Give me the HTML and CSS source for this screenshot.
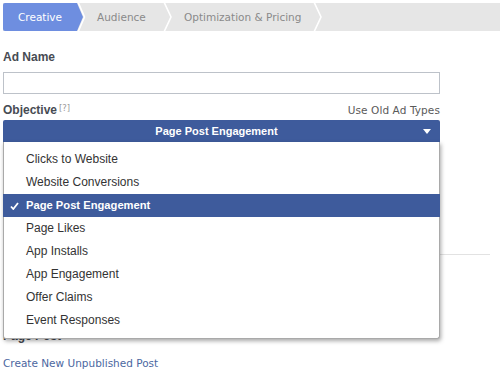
FILE: index.html
```html
<!DOCTYPE html>
<html>
<head>
<meta charset="utf-8">
<link rel="stylesheet" href="styles.css">
</head>
<body>
<div class="page">
  <nav class="steps">
    <div class="step step-active">Creative</div>
    <svg class="sep" width="10" height="28" viewBox="0 0 10 28"><polygon points="0,0 6,14 0,28" fill="#6e8ee0"/><polyline points="1,-1 7.5,14 1,29" fill="none" stroke="#fff" stroke-width="1.6"/></svg>
    <div class="step step-2">Audience</div>
    <svg class="sep" width="10" height="28" viewBox="0 0 10 28"><polyline points="1,-1 8,14 1,29" fill="none" stroke="#fff" stroke-width="1.6"/></svg>
    <div class="step step-3">Optimization &amp; Pricing</div>
    <svg class="sep" width="10" height="28" viewBox="0 0 10 28"><polyline points="1,-1 8,14 1,29" fill="none" stroke="#fff" stroke-width="1.6"/></svg>
  </nav>

  <div class="label label-first">Ad Name</div>
  <div class="input"></div>

  <div class="label-row">
    <div class="label">Objective<sup class="help">[?]</sup></div>
    <span class="old-types">Use Old Ad Types</span>
  </div>

  <div class="select">
    <div class="select-bar">
      <span class="select-text">Page Post Engagement</span>
      <svg class="caret" width="8" height="5" viewBox="0 0 8 5"><polygon points="0,0 8,0 4,5" fill="#fff"/></svg>
    </div>
    <ul class="menu">
      <li class="item">Clicks to Website</li>
      <li class="item">Website Conversions</li>
      <li class="item item-selected"><svg class="check" width="9" height="8" viewBox="0 0 9 8"><polyline points="1,4.5 3.3,7 8,1" fill="none" stroke="#fff" stroke-width="1.8"/></svg>Page Post Engagement</li>
      <li class="item">Page Likes</li>
      <li class="item">App Installs</li>
      <li class="item">App Engagement</li>
      <li class="item">Offer Claims</li>
      <li class="item">Event Responses</li>
    </ul>
  </div>

  <hr class="divider">
  <div class="input input-hidden"></div>
  <div class="label label-post">Page Post</div>
  <a class="link" href="#">Create New Unpublished Post</a>
</div>
</body>
</html>
```
FILE: styles.css
```css
html, body {
  margin: 0;
  padding: 0;
  background: #fff;
}
.page {
  padding: 3px 0 0 3px;
  font-family: "DejaVu Sans", sans-serif;
}
.steps {
  display: flex;
  align-items: center;
  height: 28px;
  background: #e6e6e6;
  font-size: 10.5px;
  color: #8a8a8a;
}
.step {
  height: 28px;
  line-height: 28px;
  white-space: nowrap;
}
.step-active {
  background: #6e8ee0;
  color: #fff;
  width: 59px;
  padding-left: 15px;
  border-radius: 2px 0 0 2px;
}
.step-2 {
  width: 66px;
  padding-left: 10px;
}
.step-3 {
  width: 129px;
  padding-left: 11px;
}
.sep {
  display: block;
  flex: none;
}
.label {
  font-family: "Liberation Sans", Arial, sans-serif;
  font-weight: bold;
  font-size: 12px;
  line-height: 15px;
  color: #474b53;
}
.label-first {
  margin-top: 19px;
}
.input {
  box-sizing: border-box;
  width: 437px;
  height: 22px;
  margin-top: 7px;
  border: 1px solid #bdc2c9;
  background: #fff;
}
.label-row {
  width: 437px;
  display: flex;
  justify-content: space-between;
  align-items: flex-end;
  margin-top: 7px;
  height: 17px;
}
.help {
  font-family: "DejaVu Sans", sans-serif;
  font-weight: normal;
  font-size: 8.5px;
  color: #999;
  vertical-align: 3px;
  margin-left: 2px;
  line-height: 0;
}
.old-types {
  font-size: 10.5px;
  color: #5a5a5a;
  line-height: 15px;
  letter-spacing: 0.1px;
}
.select {
  position: relative;
  width: 437px;
  margin-top: 2px;
}
.select-bar {
  height: 22px;
  background: #3e5b9c;
  border-radius: 2px 2px 0 0;
  display: flex;
  align-items: center;
  justify-content: center;
  padding-right: 10px;
  position: relative;
}
.select-text {
  font-family: "Liberation Sans", Arial, sans-serif;
  font-weight: bold;
  font-size: 11px;
  color: #fff;
}
.caret {
  position: absolute;
  right: 9px;
  top: 9px;
}
.menu {
  position: absolute;
  top: 22px;
  left: 0;
  right: 0;
  margin: 0;
  padding: 6px 0 6px;
  list-style: none;
  background: #fff;
  border: 1px solid #a9a9a9;
  border-top: none;
  box-sizing: border-box;
  box-shadow: 1px 2px 4px rgba(0, 0, 0, 0.35);
  border-radius: 0 0 3px 3px;
  z-index: 2;
  font-family: "Liberation Sans", Arial, sans-serif;
  font-size: 12px;
  color: #333;
}
.item {
  height: 23px;
  line-height: 23px;
  padding-left: 22px;
  position: relative;
}
.item-selected {
  background: #3e5b9c;
  color: #fff;
  font-weight: bold;
  font-size: 11.2px;
  margin: 0 -1px;
  padding-left: 23px;
}
.check {
  position: absolute;
  left: 7px;
  top: 8px;
}
.divider {
  border: none;
  border-top: 1px solid #e2e2e2;
  width: 487px;
  margin: 112px 0 0 0;
  height: 0;
}
.input-hidden {
  margin-top: 35px;
  height: 23px;
}
.label-post {
  margin-top: 16px;
}
.link {
  display: block;
  margin-top: 12px;
  font-size: 10.5px;
  line-height: 14px;
  color: #4c679f;
  text-decoration: none;
}
```
